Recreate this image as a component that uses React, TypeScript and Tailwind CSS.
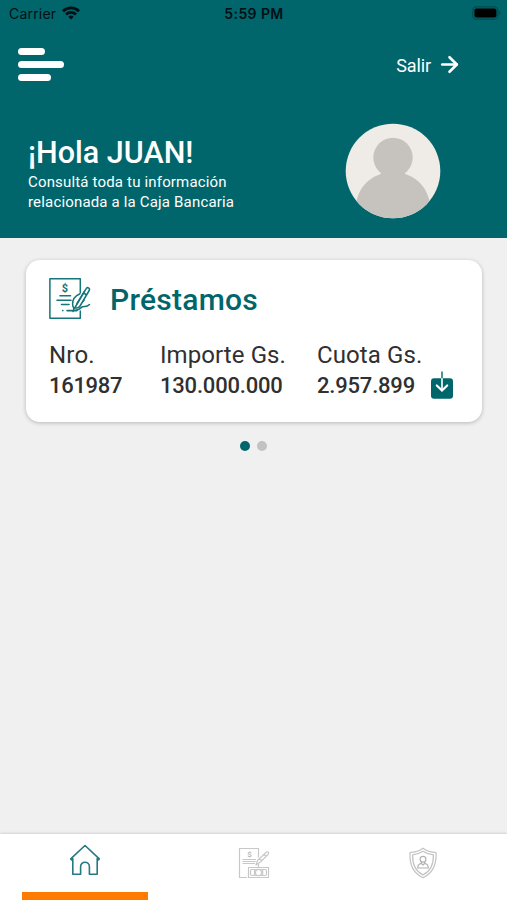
import { ArrowRight } from 'lucide-react'

const LOAN_FIELDS = [
  { label: 'Nro.', value: '161987', width: 'w-[111px]', labelTracking: 'tracking-[0.2px]', valueTracking: 'tracking-[-0.3px]' },
  { label: 'Importe Gs.', value: '130.000.000', width: 'w-[157px]', labelTracking: 'tracking-[0.08px]', valueTracking: 'tracking-[-0.2px]' },
  { label: 'Cuota Gs.', value: '2.957.899', width: 'w-[114px]', labelTracking: 'tracking-[0.1px]', valueTracking: 'tracking-[-0.2px]' },
]

function WifiIcon() {
  return (
    <svg className="w-[18px] h-[14px] -mt-[2px]" viewBox="0 0 18 14" fill="none" stroke="#001014" strokeWidth="2.8">
      <path d="M1 5.2a11.4 11.4 0 0 1 16 0" />
      <path d="M4 8.5a7.1 7.1 0 0 1 10 0" />
      <path d="M9 13.5 6.3 10.7a3.9 3.9 0 0 1 5.4 0z" fill="#001014" stroke="none" />
    </svg>
  )
}

function BatteryIcon() {
  return (
    <svg className="w-[29px] h-[14px] -mt-[2px]" viewBox="0 0 29 14">
      <rect x="0.8" y="0.8" width="25" height="12.4" rx="3.6" fill="none" stroke="#004a50" strokeWidth="1.2" />
      <rect x="2.4" y="2.4" width="22" height="9.2" rx="2" fill="#000" />
      <path d="M27.2 4.8c1.7.8 1.7 3.6 0 4.4z" fill="#004a50" />
    </svg>
  )
}

function Avatar() {
  return (
    <svg className="w-[96px] h-[96px]" viewBox="0 0 96 96">
      <defs>
        <clipPath id="avatar-clip">
          <circle cx="48" cy="48" r="47.3" />
        </clipPath>
      </defs>
      <g clipPath="url(#avatar-clip)">
        <rect width="96" height="96" fill="#efebe7" />
        <circle cx="48" cy="34.5" r="19.7" fill="#c6c3bf" />
        <path d="M36 47h24c-1.500 2.500 0 4 2 4.700C74 56 82 66 84.500 78L72 96H24L11.500 78C14 66 22 56 34 51.700c2-.7 3.500-2.200 2-4.700z" fill="#c6c3bf" />
      </g>
    </svg>
  )
}

function LoanIcon() {
  return (
    <svg className="w-[44px] h-[44px]" viewBox="0 0 44 44" fill="none" stroke="#16747a" strokeWidth="1.5" strokeLinecap="round" strokeLinejoin="round">
      <path d="M31.300 16.500V2.800H.9v39.400h30.400V35" />
      <text x="16" y="15.800" textAnchor="middle" fontFamily="Roboto, sans-serif" fontSize="11" fontWeight="700" fill="#16747a" stroke="none">$</text>
      <path d="M11 19.800h10.500M8 24.200h14M12.500 28.500h7.500M13.700 34.600h.2M18 34.600h10" strokeWidth="1.600" />
      {/* Hand holding the pen */}
      <path d="M31 17.800c-4.500 2-7.600 6-7.400 10.500 0 2 .8 3.500 1.600 4.300l9.800-8.200" fill="#fff" />
      <path d="M26 31.500 37 12.800c1.200-2.200 4.400-.8 3.200 1.700L31 30c-1.200 2-3.800 2.500-5 1.500z" fill="#fff" />
      <path d="m28 27.500 7.500-12.300M34.500 17l2.700 1.500M25 32.500l-1 3M27 34c3.500.5 4.500-2.500 6.500-3.200 2.500-.8 4 .7 7-2.300" />
    </svg>
  )
}

function DownloadIcon() {
  return (
    <svg className="w-[22px] h-[28px]" viewBox="0 0 22 28" fill="none">
      <rect x="0" y="7.300" width="22" height="20.400" rx="3" fill="#00666c" />
      <path d="M11 .5v8" stroke="#4f949b" strokeWidth="2" />
      <path d="M11 7.300V19" stroke="#cfe3e4" strokeWidth="2" />
      <path d="m5.800 14.500 5.200 5 5.200-5" stroke="#fff" strokeWidth="2.200" strokeLinecap="round" />
    </svg>
  )
}

function HomeIcon() {
  return (
    <svg className="w-[32px] h-[32px]" viewBox="0 0 32 32" fill="none" stroke="#26797f" strokeWidth="1.600" strokeLinecap="round" strokeLinejoin="round">
      <path d="M3.800 14.500 2.300 15.800 1.700 14.900 16 1.500l14.300 13.400-.6.900-1.500-1.300v15.700h-7.800v-7.500c0-6-8.800-6-8.800 0v7.500H3.800z" />
    </svg>
  )
}

function PaymentsIcon() {
  return (
    <svg className="w-[32px] h-[32px]" viewBox="0 0 32 32" fill="none" stroke="#c8c8c8" strokeWidth="1.200" strokeLinejoin="round">
      <path d="M9 30.500H1.500v-29h19v9M20.500 17v3" />
      <text x="11.500" y="9.500" textAnchor="middle" fontFamily="Roboto, sans-serif" fontSize="8" fontWeight="600" fill="#b5b5b5" stroke="none">$</text>
      <path d="M4.500 12.500h13.500M4.500 14.500h13M4.500 16.500h12.500" />
      <path d="m18 18 1.500-4.500L28.500 5c1.700-.7 2.700.6 1.900 2L23 14.500 18 18zM21 12l3 1.500M26 7.500l2 2" />
      <rect x="10.500" y="20.500" width="20" height="10" />
      <rect x="12.500" y="22.500" width="16" height="6" rx="1.500" />
      <ellipse cx="20.500" cy="25.500" rx="3" ry="3.200" />
      <path d="M16.500 23v5M24.700 23v5" />
    </svg>
  )
}

function ShieldIcon() {
  return (
    <svg className="w-[30px] h-[32px]" viewBox="0 0 30 32" fill="none" stroke="#c2c2c2" strokeWidth="1.200" strokeLinejoin="round">
      <path d="M15 1.200c3.800 2.800 8.200 4 13 4.300.7 12-2.800 20.500-13 25.300C4.800 26 1.300 17.500 2 5.500 6.800 5.200 11.200 4 15 1.200z" />
      <path d="M15 4.300c3.100 2 6.600 3.200 10.400 3.600.2 9.600-2.700 16.200-10.400 20C7.300 24.100 4.400 17.500 4.600 7.900 8.400 7.500 11.900 6.300 15 4.300z" />
      <circle cx="15" cy="12.300" r="2.900" stroke="#b2b2b2" />
      <path d="M13.300 14.800v1.500c-2.500.5-3.600 1.700-3.600 4.700h10.600c0-3-1.100-4.200-3.600-4.700v-1.500M13.300 16.300l1.700 1.700 1.700-1.700" stroke="#b2b2b2" />
    </svg>
  )
}

export default function App() {
  return (
    <div className="w-[507px] h-[900px] flex flex-col overflow-hidden bg-[#f0f0f0] font-[Roboto,sans-serif]">
      <header className="h-[238px] shrink-0 bg-[#00666c] text-white">
        {/* Status bar */}
        <div className="h-[28px] grid grid-cols-3 items-center pl-[9px] pr-[6px] font-[Inter,sans-serif] text-[14px] text-[#001014]">
          <div className="flex items-center gap-[6px] -mt-[1px]">
            <span className="tracking-[0.2px]">Carrier</span>
            <WifiIcon />
          </div>
          <span className="-mt-[1px] pr-[2px] text-center font-semibold tracking-[0.4px]">5:59 PM</span>
          <div className="flex justify-end">
            <BatteryIcon />
          </div>
        </div>

        <div className="flex items-start justify-between pl-[18px] pr-[45px] pt-[20px]">
          <button className="flex flex-col gap-[6px]" aria-label="Menu">
            <span className="w-[27px] h-[7px] rounded-full bg-white" />
            <span className="w-[46px] h-[7px] rounded-full bg-white" />
            <span className="w-[33px] h-[7px] rounded-full bg-white" />
          </button>
          <button className="flex items-center gap-[6px] pt-[5px]">
            <span className="text-[18px] leading-[26px] tracking-[-0.1px]">Salir</span>
            <ArrowRight className="w-[25px] h-[25px] -mt-[4px]" strokeWidth={2.5} />
          </button>
        </div>

        <div className="flex items-start justify-between pl-[28px] pr-[66px] pt-[42px]">
          <div className="pt-[13px]">
            <h1 className="text-[30.500px] leading-[34px] font-medium">¡Hola JUAN!</h1>
            <p className="pt-[2px] text-[15px] leading-[20px] tracking-[0.17px]">
              Consultá toda tu información
              <br />
              relacionada a la Caja Bancaria
            </p>
          </div>
          <Avatar />
        </div>
      </header>

      <main className="flex-1 pt-[22px] px-[26px]">
        <section className="w-[456px] h-[162px] rounded-[14px] bg-white pl-[23px] pt-[16px] shadow-[0_1px_4px_rgba(0,0,0,0.24)]">
          <div className="flex items-start gap-[17px]">
            <LoanIcon />
            <h2 className="pt-[6px] text-[30px] leading-[36px] font-medium tracking-[0.25px] text-[#00666c]">Préstamos</h2>
          </div>
          <div className="flex items-start pt-[20px] text-[#303030]">
            {LOAN_FIELDS.map((field) => (
              <div key={field.label} className={`${field.width} whitespace-nowrap`}>
                <p className={`text-[24px] leading-[30px] ${field.labelTracking}`}>{field.label}</p>
                <p className={`text-[22px] leading-[31px] font-medium ${field.valueTracking}`}>{field.value}</p>
              </div>
            ))}
            <button className="pt-[31px]" aria-label="Descargar">
              <DownloadIcon />
            </button>
          </div>
        </section>

        {/* Carousel dots */}
        <div className="flex justify-center gap-[7px] mt-[19px]">
          <span className="w-[10px] h-[10px] rounded-full bg-[#00666c]" />
          <span className="w-[10px] h-[10px] rounded-full bg-[#c2c2c2]" />
        </div>
      </main>

      <nav className="h-[66px] shrink-0 grid grid-cols-3 bg-white shadow-[0_-1px_2px_rgba(0,0,0,0.12)]">
        <div className="flex flex-col items-center justify-between pt-[10px]">
          <HomeIcon />
          <span className="w-[126px] h-[8px] bg-[#ff7a00]" />
        </div>
        <div className="flex justify-center pt-[13px]">
          <PaymentsIcon />
        </div>
        <div className="flex justify-center pt-[13px]">
          <ShieldIcon />
        </div>
      </nav>
    </div>
  )
}
